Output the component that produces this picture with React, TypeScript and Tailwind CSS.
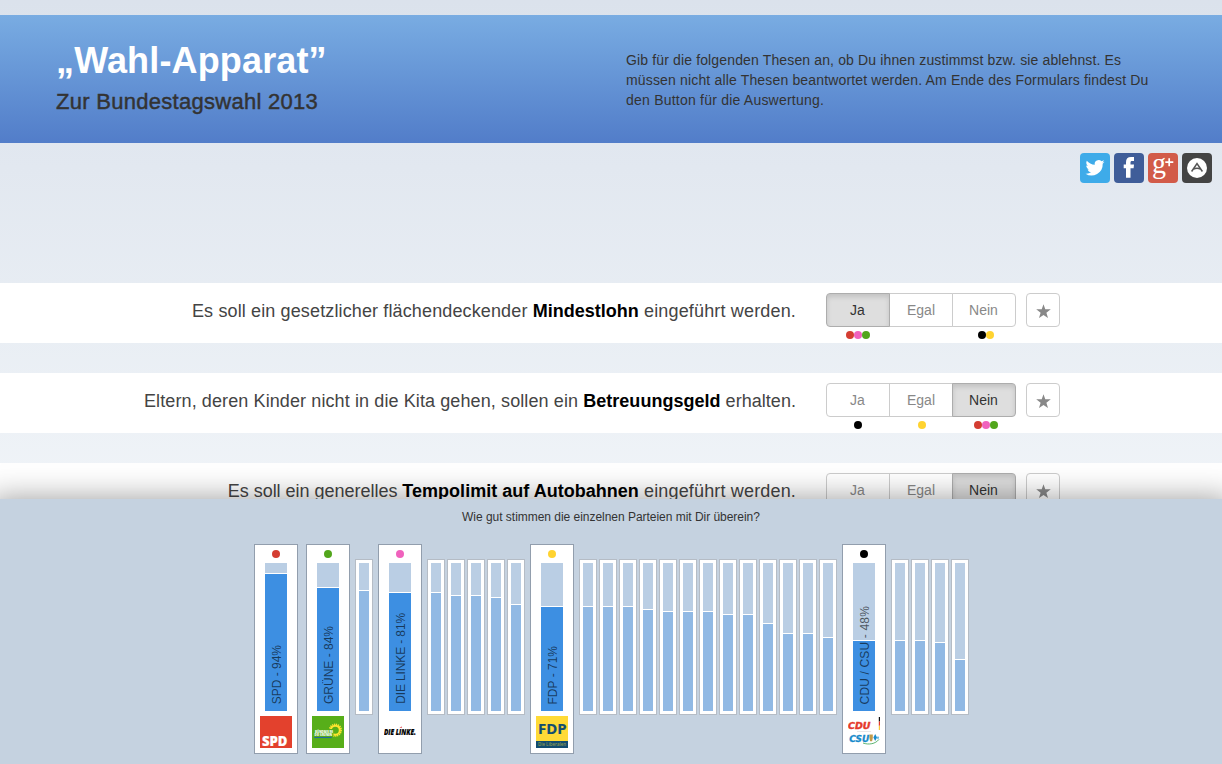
import React from "react";

type Dot = "red" | "pink" | "green" | "black" | "yellow";

const dotColor: Record<Dot, string> = {
  red: "bg-[#d43d32]",
  pink: "bg-[#f062bd]",
  green: "bg-[#52a61c]",
  black: "bg-black",
  yellow: "bg-[#ffd330]",
};

function Dots({ dots }: { dots: Dot[] }) {
  return (
    <div className="flex h-2 w-16 justify-center">
      {dots.map((d) => (
        <span key={d} className={`size-2 rounded-full ${dotColor[d]}`} />
      ))}
    </div>
  );
}

interface Thesis {
  before: string;
  key: string;
  after: string;
  beforeTracking: string;
  afterTracking: string;
  answer: number;
  dots: Dot[][];
}

const theses: Thesis[] = [
  {
    before: "Es soll ein gesetzlicher flächendeckender ",
    key: "Mindestlohn",
    after: " eingeführt werden.",
    beforeTracking: "tracking-[0.13px]",
    afterTracking: "tracking-[0.16px]",
    answer: 0,
    dots: [["red", "pink", "green"], [], ["black", "yellow"]],
  },
  {
    before: "Eltern, deren Kinder nicht in die Kita gehen, sollen ein ",
    key: "Betreuungsgeld",
    after: " erhalten.",
    beforeTracking: "tracking-[0.105px]",
    afterTracking: "tracking-[0.04px]",
    answer: 2,
    dots: [["black"], ["yellow"], ["red", "pink", "green"]],
  },
  {
    before: "Es soll ein generelles ",
    key: "Tempolimit auf Autobahnen",
    after: " eingeführt werden.",
    beforeTracking: "tracking-[-0.02px]",
    afterTracking: "tracking-[0.16px]",
    answer: 2,
    dots: [[], [], []],
  },
];

function ThesisRow({ thesis }: { thesis: Thesis }) {
  return (
    <section className="flex h-[60px] shrink-0 bg-white pt-2.5">
      <p className="w-[796px] shrink-0 pt-1.5 text-right text-[18px] leading-6 whitespace-nowrap text-[#444]">
        <span className={thesis.beforeTracking}>{thesis.before}</span>
        <strong className="font-bold tracking-[0.02px] text-black">{thesis.key}</strong>
        <span className={thesis.afterTracking}>{thesis.after}</span>
      </p>
      <div className="ml-[30px] w-[190px]">
        <div className="flex h-[34px]">
          {["Ja", "Egal", "Nein"].map((label, i) => (
            <button
              key={label}
              className={`h-[34px] w-16 border text-[14px] leading-5 ${i > 0 ? "-ml-px" : "rounded-l"} ${i === 2 ? "rounded-r" : ""} ${i !== 1 ? "pr-[7px]" : ""} ${
                thesis.answer === i
                  ? "z-10 border-[#adadad] bg-[#dedede] text-[#333] shadow-[inset_0_3px_5px_rgba(0,0,0,0.125)]"
                  : "border-[#ccc] bg-white text-[#888]"
              } ${i !== 1 ? "pl-[6px]" : ""}`}
            >
              {label}
            </button>
          ))}
        </div>
        <div className="mt-1 flex w-48">
          {thesis.dots.map((d, i) => (
            <Dots key={i} dots={d} />
          ))}
        </div>
      </div>
      <button className="ml-2.5 flex size-[34px] items-center justify-center rounded border border-[#ccc] bg-white">
        <svg viewBox="0 0 14 14" className="mt-0.5 size-[15px]" fill="#888">
          <path d="M7 .2 8.65 5H13.8L9.7 8.15 11.2 13.1 7 10.15 2.8 13.1 4.3 8.15.2 5H5.35Z" />
        </svg>
      </button>
    </section>
  );
}

function SpdLogo() {
  return (
    <svg viewBox="0 0 32 32" className="size-8">
      <rect width="32" height="32" fill="#e3412d" />
      <text x="2" y="30" fontFamily="Open Sans" fontWeight="800" fontSize="13.6" fill="#fff" stroke="#fff" strokeWidth=".2" textLength="25.5" lengthAdjust="spacingAndGlyphs">SPD</text>
    </svg>
  );
}

function GreenLogo() {
  return (
    <svg viewBox="0 0 32 32" className="size-8">
      <rect width="32" height="32" fill="#57ae19" />
      <circle cx="23.3" cy="14.2" r="5.8" fill="none" stroke="#ffe52e" strokeWidth="1.7" strokeDasharray="1.2 .75" />
      <circle cx="23.3" cy="14.2" r="4.5" fill="none" stroke="#ffe52e" strokeWidth="2" />
      <path d="M14 13h7.4v7.4H14Z" fill="#57ae19" />
      <g fontFamily="Open Sans" fontWeight="800" fontSize="3.4" fill="#fff">
        <text x="3" y="17" textLength="18" lengthAdjust="spacingAndGlyphs">BÜNDNIS 90</text>
        <text x="2.6" y="20.4" textLength="17.5" lengthAdjust="spacingAndGlyphs">DIE GRÜNEN</text>
      </g>
      <path d="M2.3 21.5h17.4" stroke="#236c9b" strokeWidth="1.2" />
    </svg>
  );
}

function LinkeLogo() {
  return (
    <svg viewBox="0 0 32 32" className="size-8">
      <text x="0" y="19" fontFamily="Open Sans" fontStyle="italic" fontWeight="800" fontSize="8.8" fill="#000" stroke="#000" strokeWidth=".2" textLength="32" lengthAdjust="spacingAndGlyphs">DIE LINKE.</text>
      <path d="m15.5 12 2-1.6.7 1.2Z" fill="#d7262b" />
    </svg>
  );
}

function FdpLogo() {
  return (
    <svg viewBox="0 0 32 32" className="size-8">
      <rect width="32" height="32" fill="#ffda36" />
      <rect y="25" width="32" height="7" fill="#124c70" />
      <text x="2" y="18.4" fontFamily="Open Sans" fontWeight="700" fontSize="15" fill="#124c70" stroke="#124c70" strokeWidth=".2" textLength="28.5" lengthAdjust="spacingAndGlyphs">FDP</text>
      <text x="2" y="30.2" fontFamily="Open Sans" fontWeight="600" fontSize="4.5" fill="#8e9b50" textLength="28" lengthAdjust="spacingAndGlyphs">Die Liberalen</text>
    </svg>
  );
}

function CduLogo() {
  return (
    <svg viewBox="0 0 32 32" className="size-8">
      <g fontFamily="DejaVu Sans" fontStyle="italic" fontWeight="700">
        <text x="0" y="12.8" fontSize="9" fill="#e5392b" stroke="#e5392b" strokeWidth=".4" textLength="22.5" lengthAdjust="spacingAndGlyphs">CDU</text>
        <text x="1.2" y="25.5" fontSize="9" fill="#168acb" stroke="#168acb" strokeWidth=".3" textLength="20" lengthAdjust="spacingAndGlyphs">CSU</text>
      </g>
      <path d="M9 15.5h14" stroke="#ddd" strokeWidth=".7" />
      <path d="M31.4 1v4.5" stroke="#111" strokeWidth="1.2" />
      <path d="M31.4 5.5v4.3" stroke="#e5392b" strokeWidth="1.2" />
      <path d="M31.4 9.8v4.2" stroke="#f8c83a" strokeWidth="1.2" />
      <path d="M21.4 18.5h3.4v3.4l-.7 3.4h-2l-.7-3.4Z" fill="#c29a4b" />
      <path d="m27.2 18 1.8 3.4-1.8 3.6-1.8-3.6Z" fill="#168acb" />
      <path d="m30 20 1.2 1.7-1.2 1.8-1.2-1.8Z" fill="#5eb4df" />
      <path d="M15 27c5.8 2.1 12.5.9 16-3.6" stroke="#4bac61" strokeWidth=".9" fill="none" />
    </svg>
  );
}

interface Party {
  rest: number;
  name?: string;
  tracking?: string;
  dot?: Dot;
  logo?: React.ReactNode;
}

const parties: Party[] = [
  { rest: 10, name: "SPD - 94%", dot: "red", logo: <SpdLogo /> },
  { rest: 24, name: "GRÜNE - 84%", dot: "green", logo: <GreenLogo /> },
  { rest: 27 },
  { rest: 29, name: "DIE LINKE - 81%", tracking: "tracking-[-0.13px]", dot: "pink", logo: <LinkeLogo /> },
  ...[29, 32, 32, 34, 41].map((rest) => ({ rest })),
  { rest: 43, name: "FDP - 71%", dot: "yellow", logo: <FdpLogo /> },
  ...[43, 43, 43, 46, 48, 48, 48, 51, 51, 60, 70, 70, 74].map((rest) => ({ rest })),
  { rest: 77, name: "CDU / CSU - 48%", tracking: "tracking-[0.16px]", dot: "black", logo: <CduLogo /> },
  ...[77, 77, 79, 96].map((rest) => ({ rest })),
];

function PartyBar({ party }: { party: Party }) {
  if (!party.name) {
    return (
      <div className="mx-px mt-[15px] flex h-[156px] w-[18px] shrink-0 flex-col border border-[#b5bcc5] bg-white p-[3px]">
        <div className="shrink-0 bg-[#bacee4]" style={{ height: party.rest }} />
        <div className="mt-px flex-1 bg-[#91b9e4]" />
      </div>
    );
  }
  return (
    <div className="mx-1 flex h-[210px] w-11 shrink-0 flex-col items-center border border-[#929ead] bg-white pt-[5px]">
      <span className={`size-2 shrink-0 rounded-full ${dotColor[party.dot!]}`} />
      <div className="relative mt-[5px] flex h-[148px] w-[22px] shrink-0 flex-col">
        <div className="shrink-0 bg-[#bacee4]" style={{ height: party.rest }} />
        <div className="mt-px flex-1 bg-[#3d8fe2]" />
        <span
          className={`absolute bottom-[7px] left-px w-[22px] rotate-180 text-[12px] leading-[22px] whitespace-nowrap text-black/60 [writing-mode:vertical-rl] ${party.tracking ?? ""}`}
        >
          {party.name}
        </span>
      </div>
      <div className="mt-[5px]">{party.logo}</div>
    </div>
  );
}

function SocialLinks() {
  return (
    <div className="flex h-[140px] shrink-0 justify-end gap-1 pt-2.5 pr-2.5">
      <a className="size-[30px] rounded bg-[#3eabe9]">
        <svg viewBox="0 0 30 30" fill="#fff">
          <path d="M24.5 8.8c-.7.3-1.4.5-2.2.6.8-.5 1.4-1.2 1.7-2.1-.8.5-1.6.8-2.5 1a3.9 3.9 0 0 0-6.7 3.5c-3.2-.2-6.1-1.7-8-4.1-1 1.8-.5 4 1.2 5.2-.6 0-1.2-.2-1.8-.5 0 1.9 1.4 3.5 3.1 3.9-.6.1-1.2.2-1.7.1.5 1.5 1.9 2.6 3.6 2.7A7.9 7.9 0 0 1 5.5 20.7a11.2 11.2 0 0 0 17.2-9.9c.7-.5 1.3-1.2 1.8-2Z" />
        </svg>
      </a>
      <a className="size-[30px] rounded bg-[#3f5d99]">
        <svg viewBox="0 0 30 30" fill="#fff">
          <path d="M12 24.7V15.3H9.7v-3.9H12V9.3c0-3.4 1.7-5.2 5-5.2h3v3.8h-1.8c-1.4 0-1.7.6-1.7 1.8v1.7H20l-.4 3.9h-3.1v9.4Z" />
        </svg>
      </a>
      <a className="size-[30px] rounded bg-[#d25b49]">
        <svg viewBox="0 0 30 30" fill="#fff">
          <text x="4" y="20" fontFamily="Liberation Serif" fontSize="30" textLength="14" lengthAdjust="spacingAndGlyphs">g</text>
          <path d="M21.2 5.2v8M17.3 9.2h8" stroke="#fff" strokeWidth="1.7" />
        </svg>
      </a>
      <a className="size-[30px] rounded bg-[#444]">
        <svg viewBox="0 0 30 30">
          <circle cx="15" cy="15" r="10" fill="#fff" />
          <path d="m9.6 18.5 5.4-8 5.4 8M11.6 16.2c2-1 4.8-1 6.8 0" fill="none" stroke="#555" strokeWidth="1.5" />
        </svg>
      </a>
    </div>
  );
}

export default function App() {
  return (
    <div className="flex h-[764px] w-[1222px] flex-col overflow-hidden bg-linear-to-b from-[#dbe2ec] to-[#f0f4f8] to-[500px] font-['Liberation_Sans',sans-serif]">
      <div className="flex h-[499px] shrink-0 flex-col overflow-hidden pt-[15px]">
        <header className="flex h-32 shrink-0 bg-linear-to-b from-[#79ace2] to-[#527dc9] pl-14">
          <div className="w-[570px] pt-[26px]">
            <h1 className="text-[36px] leading-10 font-bold tracking-[0.15px] whitespace-nowrap text-white">„Wahl-Apparat”</h1>
            <h2 className="mt-[7px] text-[22px] leading-7 tracking-[0.28px] whitespace-nowrap text-[#333] [-webkit-text-stroke:0.45px_#333]">Zur Bundestagswahl 2013</h2>
          </div>
          <p className="pt-[35px] text-[14px] leading-5 tracking-[0.16px] whitespace-nowrap text-[#333]">
            <span className="tracking-[0.14px]">Gib für die folgenden Thesen an, ob Du ihnen zustimmst bzw. sie ablehnst. Es</span>
            <br />
            müssen nicht alle Thesen beantwortet werden. Am Ende des Formulars findest Du
            <br />
            <span className="tracking-[0.22px]">den Button für die Auswertung.</span>
          </p>
        </header>
        <SocialLinks />
        <main className="flex flex-col gap-[30px]">
          {theses.map((t) => (
            <ThesisRow key={t.key} thesis={t} />
          ))}
        </main>
      </div>
      <footer className="z-20 h-[265px] shrink-0 bg-[#c5d2e0] shadow-[0_10px_30px_10px_rgba(0,0,0,0.4)]">
        <p className="h-[45px] pt-2 text-center text-[12px] leading-5 tracking-[-0.03px] text-[#333]">
          Wie gut stimmen die einzelnen Parteien mit Dir überein?
        </p>
        <div className="flex pl-[250px]">
          {parties.map((p, i) => (
            <PartyBar key={i} party={p} />
          ))}
        </div>
      </footer>
    </div>
  );
}
